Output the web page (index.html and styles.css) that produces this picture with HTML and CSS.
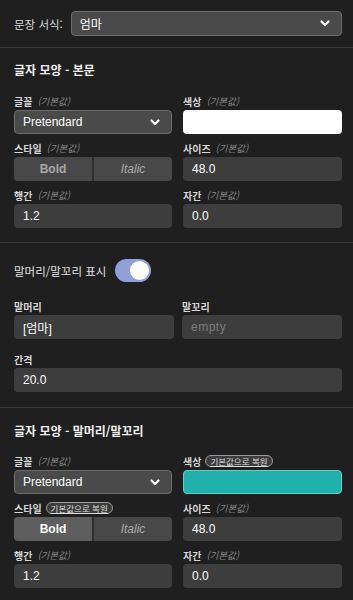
FILE: index.html
```html
<!DOCTYPE html>
<html lang="ko">
<head>
<meta charset="utf-8">
<link rel="stylesheet" href="styles.css">
</head>
<body>
<div class="top">
  <span class="top-label">문장 서식:</span>
  <div class="select select-top">
    <span>엄마</span>
    <svg class="chev" width="10" height="7" viewBox="0 0 10 7"><path d="M1.5 1.5 L5 5 L8.5 1.5" fill="none" stroke="#fff" stroke-width="2.2" stroke-linecap="round" stroke-linejoin="round"/></svg>
  </div>
</div>
<div class="sep"></div>

<section class="sec sec1">
  <h2 class="heading">글자 모양 - 본문</h2>
  <div class="grid">
    <div class="field">
      <div class="lbl"><b>글꼴</b><i>(기본값)</i></div>
      <div class="select"><span>Pretendard</span>
        <svg class="chev" width="10" height="7" viewBox="0 0 10 7"><path d="M1.5 1.5 L5 5 L8.5 1.5" fill="none" stroke="#fff" stroke-width="2.2" stroke-linecap="round" stroke-linejoin="round"/></svg>
      </div>
    </div>
    <div class="field">
      <div class="lbl"><b>색상</b><i>(기본값)</i></div>
      <div class="color color-white"></div>
    </div>
    <div class="field">
      <div class="lbl"><b>스타일</b><i>(기본값)</i></div>
      <div class="seg"><span class="seg-b">Bold</span><span class="seg-i">Italic</span></div>
    </div>
    <div class="field">
      <div class="lbl"><b>사이즈</b><i>(기본값)</i></div>
      <div class="input">48.0</div>
    </div>
    <div class="field">
      <div class="lbl"><b>행간</b><i>(기본값)</i></div>
      <div class="input">1.2</div>
    </div>
    <div class="field">
      <div class="lbl"><b>자간</b><i>(기본값)</i></div>
      <div class="input">0.0</div>
    </div>
  </div>
</section>
<div class="sep"></div>

<section class="sec sec2">
  <div class="toggle-row">
    <span class="toggle-label">말머리/말꼬리 표시</span>
    <span class="toggle"><span class="knob"></span></span>
  </div>
  <div class="grid grid2">
    <div class="field">
      <div class="lbl"><b>말머리</b></div>
      <div class="input">[엄마]</div>
    </div>
    <div class="field">
      <div class="lbl"><b>말꼬리</b></div>
      <div class="input placeholder">empty</div>
    </div>
  </div>
  <div class="field field-gap">
    <div class="lbl"><b>간격</b></div>
    <div class="input">20.0</div>
  </div>
</section>
<div class="sep"></div>

<section class="sec sec3">
  <h2 class="heading">글자 모양 - 말머리/말꼬리</h2>
  <div class="grid">
    <div class="field">
      <div class="lbl"><b>글꼴</b><i>(기본값)</i></div>
      <div class="select"><span>Pretendard</span>
        <svg class="chev" width="10" height="7" viewBox="0 0 10 7"><path d="M1.5 1.5 L5 5 L8.5 1.5" fill="none" stroke="#fff" stroke-width="2.2" stroke-linecap="round" stroke-linejoin="round"/></svg>
      </div>
    </div>
    <div class="field">
      <div class="lbl"><b>색상</b><span class="badge">기본값으로 복원</span></div>
      <div class="color color-teal"></div>
    </div>
    <div class="field">
      <div class="lbl"><b>스타일</b><span class="badge">기본값으로 복원</span></div>
      <div class="seg"><span class="seg-b active">Bold</span><span class="seg-i">Italic</span></div>
    </div>
    <div class="field">
      <div class="lbl"><b>사이즈</b><i>(기본값)</i></div>
      <div class="input">48.0</div>
    </div>
    <div class="field">
      <div class="lbl"><b>행간</b><i>(기본값)</i></div>
      <div class="input">1.2</div>
    </div>
    <div class="field">
      <div class="lbl"><b>자간</b><i>(기본값)</i></div>
      <div class="input">0.0</div>
    </div>
  </div>
</section>
</body>
</html>
```

FILE: styles.css
```css
* { box-sizing: border-box; }
html, body { margin: 0; padding: 0; }
body {
  background: #1f1f1f;
  color: #e6e6e6;
  font-family: "Liberation Sans", "Noto Sans CJK KR", sans-serif;
  width: 353px;
  height: 600px;
  overflow: hidden;
}
.top {
  display: flex;
  align-items: center;
  gap: 8px;
  padding: 11px 11px 11px 14px;
}
.top-label {
  font-size: 11.5px;
  color: #d8d8d8;
  font-family: "Noto Sans CJK KR", sans-serif;
}
.select {
  flex: 1;
  height: 24px;
  background: #4a4a4a;
  border: 1px solid #6c6c6c;
  border-radius: 4px;
  display: flex;
  align-items: center;
  justify-content: space-between;
  padding: 0 11px 0 8px;
  font-size: 12px;
  color: #fff;
}
.select-top { height: 25px; padding-left: 8px; font-family: "Noto Sans CJK KR", sans-serif; }
.chev { display: block; }
.sep { height: 1px; background: #3a3a3a; }
.sec { padding: 0 11px 0 14px; }
.sec1 { padding-top: 13px; padding-bottom: 14px; }
.sec2 { padding-top: 16px; padding-bottom: 15px; }
.sec3 { padding-top: 14px; padding-bottom: 14px; }
.heading {
  margin: 0 0 14px 0;
  font-size: 12px;
  line-height: 18px;
  font-weight: 700;
  color: #f0f0f0;
  font-family: "Noto Sans CJK KR", sans-serif;
}
.sec3 .heading { margin-bottom: 13px; }
.grid {
  display: grid;
  grid-template-columns: 158px 159px;
  column-gap: 11px;
  row-gap: 6px;
}
.grid2 { grid-template-columns: 160px 160px; column-gap: 8px; }
.field-gap { margin-top: 12px; }
.lbl {
  height: 16px;
  margin-bottom: 1px;
  display: flex;
  align-items: center;
  gap: 5px;
  font-family: "Noto Sans CJK KR", sans-serif;
  white-space: nowrap;
}
.lbl b { font-size: 10px; font-weight: 700; color: #d6d6d6; }
.lbl i { font-size: 9.5px; color: #858585; font-style: italic; }
.badge {
  font-size: 8.5px;
  color: #dcdcdc;
  text-decoration: underline;
  border: 1px solid #9a9a9a;
  background: #3c3c3c;
  border-radius: 6px;
  padding: 0 4px;
  line-height: 10px;
  margin-left: -1px;
}
.input {
  height: 24px;
  background: #3d3d3d;
  border-radius: 4px;
  display: flex;
  align-items: center;
  padding: 0 9px;
  font-size: 12px;
  color: #fff;
  font-family: "Liberation Sans", "Noto Sans CJK KR", sans-serif;
}
.placeholder { color: #7c7c7c; letter-spacing: 0.5px; }
.color { height: 24px; border-radius: 4px; }
.color-white { background: #ffffff; }
.color-teal { background: #20b2aa; border: 1px solid #5fcfc8; }
.seg {
  height: 24px;
  display: flex;
  gap: 2px;
  background: #2e2e2e;
  border-radius: 4px;
  overflow: hidden;
}
.seg span {
  flex: 1;
  display: flex;
  align-items: center;
  justify-content: center;
  background: #484848;
  font-size: 12px;
  color: #a8a8a8;
}
.seg-b { font-weight: 700; }
.seg-i { font-style: italic; color: #9a9a9a; }
.seg .active { background: #5e5e5e; color: #fff; }
.toggle-row {
  display: flex;
  align-items: center;
  gap: 9px;
  height: 23px;
  margin-bottom: 16px;
}
.toggle-label {
  font-size: 11.5px;
  color: #e0e0e0;
  font-family: "Noto Sans CJK KR", sans-serif;
}
.toggle {
  width: 36px;
  height: 23px;
  border-radius: 12px;
  background: #8fa1d6;
  display: flex;
  align-items: center;
  justify-content: flex-end;
  padding-right: 2px;
}
.knob {
  width: 19px;
  height: 19px;
  border-radius: 50%;
  background: #fff;
}
```
